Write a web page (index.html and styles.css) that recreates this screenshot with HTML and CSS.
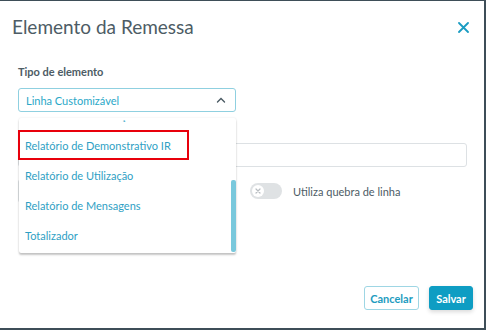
FILE: index.html
```html
<!DOCTYPE html>
<html lang="pt">
<head>
<meta charset="utf-8">
<link rel="stylesheet" href="styles.css">
</head>
<body>
<div class="modal">
  <header class="modal-header">
    <h1 class="modal-title">Elemento da Remessa</h1>
    <button class="close" aria-label="Fechar">
      <svg width="11" height="11" viewBox="0 0 11 11"><path d="M1 1L10 10M10 1L1 10" stroke="#1a9cc2" stroke-width="1.8" stroke-linecap="round"/></svg>
    </button>
  </header>
  <div class="modal-body">
    <label class="field-label">Tipo de elemento</label>
    <div class="select">
      <span>Linha Customizável</span>
      <svg width="10" height="6" viewBox="0 0 10 6"><path d="M1.5 5L5 1.5L8.5 5" fill="none" stroke="#4a5a63" stroke-width="1.4" stroke-linecap="round"/></svg>
    </div>
    <div class="input-wide"></div>
    <div class="row">
      <div class="input-half"></div>
      <div class="toggle-wrap">
        <span class="toggle"><span class="knob">
          <svg width="8" height="8" viewBox="0 0 8 8"><path d="M2 2L6 6M6 2L2 6" stroke="#b8bdc1" stroke-width="1.2" stroke-linecap="round"/></svg>
        </span></span>
        <span class="toggle-label">Utiliza quebra de linha</span>
      </div>
    </div>
    <div class="dropdown">
      <div class="viewport">
        <ul class="options">
          <li>Relatório de Cobrança</li>
          <li>Relatório de Demonstrativo IR</li>
          <li>Relatório de Utilização</li>
          <li>Relatório de Mensagens</li>
          <li>Totalizador</li>
        </ul>
      </div>
      <span class="thumb"></span>
    </div>
    <div class="highlight"></div>
  </div>
  <footer class="modal-footer">
    <button class="btn btn-secondary">Cancelar</button>
    <button class="btn btn-primary">Salvar</button>
  </footer>
</div>
</body>
</html>
```
FILE: styles.css
```css
* { box-sizing: border-box; }
html, body { margin: 0; padding: 0; }
body {
  width: 486px;
  height: 330px;
  background: #3e4e58;
  font-family: Lato, "Open Sans", sans-serif;
  overflow: hidden;
}
.modal {
  width: 484px;
  height: 327px;
  margin-top: 1px;
  background: #fff;
  display: flex;
  flex-direction: column;
}
.modal-header {
  display: flex;
  justify-content: space-between;
  align-items: flex-start;
  padding: 14px 15px 0 12px;
  height: 46px;
}
.modal-title {
  margin: 0;
  font-size: 19px;
  line-height: 24px;
  font-weight: 400;
  color: #4d5c65;
}
.close {
  border: 0;
  background: none;
  padding: 0;
  margin-top: 7px;
  width: 11px;
  height: 11px;
  display: flex;
}
.modal-body {
  position: relative;
  padding: 18px 0 0 18px;
  flex: 1;
}
.field-label {
  display: block;
  font-size: 11px;
  line-height: 14px;
  font-weight: 700;
  color: #4d5c65;
  margin-bottom: 9px;
}
.select {
  width: 218px;
  height: 24px;
  border: 1px solid #8fd0e0;
  border-radius: 3px;
  display: flex;
  align-items: center;
  justify-content: space-between;
  padding: 0 9px 0 7px;
  font-size: 11px;
  color: #2aa8c8;
}
.input-wide {
  margin-top: 31px;
  width: 449px;
  height: 24px;
  border: 1px solid #dde1e4;
  border-radius: 3px;
}
.row {
  display: flex;
  align-items: center;
  margin-top: 12px;
  gap: 14px;
}
.input-half {
  width: 218px;
  height: 24px;
  border: 1px solid #dde1e4;
  border-radius: 3px;
}
.toggle-wrap {
  display: flex;
  align-items: center;
  gap: 11px;
}
.toggle {
  width: 32px;
  height: 16px;
  border-radius: 8px;
  background: #dfe2e4;
  display: flex;
  align-items: center;
  padding-left: 2px;
}
.knob {
  width: 12px;
  height: 12px;
  border-radius: 50%;
  background: #fff;
  display: flex;
  align-items: center;
  justify-content: center;
}
.toggle-label {
  font-size: 11px;
  color: #4d5c65;
}
.dropdown {
  position: absolute;
  left: 19px;
  top: 71px;
  width: 217px;
  height: 135px;
  background: #fff;
  border-radius: 2px;
  box-shadow: 0 2px 2px rgba(0,0,0,0.22), 0 0 2px rgba(0,0,0,0.1);
  padding-top: 2px;
}
.viewport {
  height: 133px;
  overflow: hidden;
}
.options {
  list-style: none;
  margin: -19px 0 0 0;
  padding: 0;
}
.options li {
  height: 30px;
  line-height: 30px;
  padding-left: 6px;
  font-size: 11px;
  color: #2f9fc4;
  white-space: nowrap;
}
.thumb {
  position: absolute;
  right: 0;
  top: 62px;
  width: 5px;
  height: 72px;
  background: #79c8dc;
  border-radius: 2px;
}
.highlight {
  position: absolute;
  left: 18px;
  top: 83px;
  width: 171px;
  height: 30px;
  border: 2px solid #e8000c;
}
.modal-footer {
  display: flex;
  justify-content: flex-end;
  gap: 10px;
  padding: 0 11px 18px 0;
}
.btn {
  height: 24px;
  border-radius: 3px;
  font-family: Lato, "Open Sans", sans-serif;
  font-size: 11px;
  font-weight: 700;
  padding: 0;
}
.btn-secondary {
  background: #fff;
  border: 1px solid #9ed6e4;
  color: #1e9cc0;
  width: 55px;
}
.btn-primary {
  background: #0e9dc3;
  border: 1px solid #0e9dc3;
  color: #fff;
  width: 44px;
  box-shadow: 0 2px 4px rgba(0,0,0,0.15);
}
```
